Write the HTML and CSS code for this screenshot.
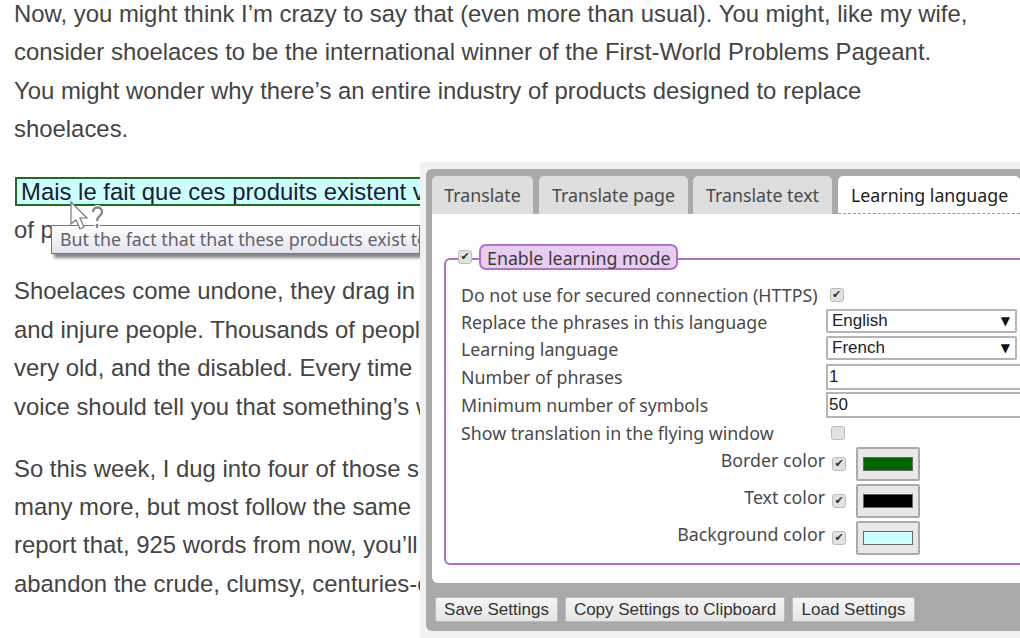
FILE: index.html
```html
<!DOCTYPE html>
<html lang="en">
<head>
    <meta charset="UTF-8">
    <title>Learning language</title>
    <link rel="stylesheet" href="styles.css">
</head>
<body>
<div class="article">
    <p>Now, you might think I’m crazy to say that (even more than usual). You might, like my wife,<br>
        consider shoelaces to be the international winner of the First-World Problems Pageant.<br>
        You might wonder why there’s an entire industry of products designed to replace<br>
        shoelaces.</p>
    <p class="under-popup"><span class="highlight">Mais le fait que ces produits existent v</span><br>
        of p</p>
    <p class="under-popup">Shoelaces come undone, they drag in<br>
        and injure people. Thousands of peopl<br>
        very old, and the disabled. Every time<br>
        voice should tell you that something’s w</p>
    <p class="under-popup">So this week, I dug into four of those s<br>
        many more, but most follow the same<br>
        report that, 925 words from now, you’ll<br>
        abandon the crude, clumsy, centuries-o</p>
</div>

<div class="tip">But the fact that that these products exist to solve</div>
<svg class="cursor" width="36" height="32" viewBox="0 0 36 32">
    <path d="M1 1 L1 23 L6 19 L10 28 L14 26 L10 17 L17 17 Z" fill="#fff" stroke="#777" stroke-width="1.2"/>
    <path d="M23 11 C23 5 32 5 32 11 C32 15 27 15 27 20 M27 23 L27 27" fill="none" stroke="#fff" stroke-width="5"/>
    <path d="M23 11 C23 5 32 5 32 11 C32 15 27 15 27 20 M27 23 L27 27" fill="none" stroke="#888" stroke-width="2.4"/>
</svg>

<div class="popup">
    <div class="panel">
        <div class="tabs">
            <div class="tab tab-1">Translate</div>
            <div class="tab tab-2">Translate page</div>
            <div class="tab tab-3">Translate text</div>
            <div class="tab active">Learning language</div>
        </div>
        <div class="content">
            <div class="group">
                <div class="legend">
                    <input type="checkbox" checked disabled>
                    <span class="legend-label">Enable learning mode</span>
                </div>
                <div class="row row-https">
                    <span>Do not use for secured connection (HTTPS)</span>
                    <input type="checkbox" checked disabled>
                </div>
                <div class="row row-select">
                    <span class="label">Replace the phrases in this language</span>
                    <div class="fake-select"><span>English</span><span class="arrow">▼</span></div>
                </div>
                <div class="row row-select">
                    <span class="label">Learning language</span>
                    <div class="fake-select"><span>French</span><span class="arrow">▼</span></div>
                </div>
                <div class="row row-number">
                    <span class="label">Number of phrases</span>
                    <input class="num" type="text" value="1">
                </div>
                <div class="row row-input">
                    <span class="label">Minimum number of symbols</span>
                    <input class="num" type="text" value="50">
                </div>
                <div class="row row-flying">
                    <span class="label">Show translation in the flying window</span>
                    <input type="checkbox" disabled>
                </div>
                <div class="colors">
                    <div class="color-row">
                        <span>Border color</span>
                        <input type="checkbox" checked disabled>
                        <div class="swatch"><div class="swatch-fill fill-green"></div></div>
                    </div>
                    <div class="color-row">
                        <span>Text color</span>
                        <input type="checkbox" checked disabled>
                        <div class="swatch"><div class="swatch-fill fill-black"></div></div>
                    </div>
                    <div class="color-row">
                        <span>Background color</span>
                        <input type="checkbox" checked disabled>
                        <div class="swatch"><div class="swatch-fill fill-cyan"></div></div>
                    </div>
                </div>
            </div>
        </div>
        <div class="footer">
            <button>Save Settings</button>
            <button>Copy Settings to Clipboard</button>
            <button>Load Settings</button>
        </div>
    </div>
</div>
</body>
</html>
```

FILE: styles.css
```css
html, body {
    height: 100%;
}
body {
    margin: 0;
    background: #fff;
    overflow: hidden;
    font-family: "Liberation Sans", Arial, sans-serif;
    color: #444;
}

.article {
    margin-top: -5px;
    padding: 0 0 0 14px;
    white-space: nowrap;
    font-size: 23.9px;
    line-height: 38.4px;
}
.article p {
    margin: 0 0 23.5px;
}
.article .under-popup {
    width: 406px;
    overflow: hidden;
}
.highlight {
    display: inline-block;
    width: 406px;
    box-sizing: border-box;
    overflow: hidden;
    vertical-align: top;
    margin-top: 5px;
    line-height: 25px;
    padding: 0 5px 0 4px;
    margin-left: 1px;
    color: #1a2030;
    background: #ccffff;
    border: 2px solid #1d6e1d;
    border-width: 2px 0 2px 2px;
}

.cursor {
    position: absolute;
    left: 70px;
    top: 201px;
}
.tip {
    position: absolute;
    left: 51px;
    top: 225px;
    width: 369px;
    height: 29px;
    padding-left: 8px;
    box-sizing: border-box;
    white-space: nowrap;
    overflow: hidden;
    font-family: "Noto Sans", sans-serif;
    font-size: 17.8px;
    line-height: 27px;
    color: #62626c;
    background: linear-gradient(#fff, #e3e3ef);
    border: 1px solid #777;
    box-shadow: 3px 4px 3px #888;
}

.popup {
    position: absolute;
    left: 420px;
    top: 162px;
    right: 0;
    bottom: 0;
    padding: 7px 0 7px 6px;
    background: #f1f1f1;
    font-family: "Noto Sans", sans-serif;
    font-size: 17.8px;
    color: #4a4a4a;
}
.panel {
    display: flex;
    flex-direction: column;
    height: 100%;
    background: #a9a9a9;
    border-radius: 6px 0 0 6px;
    padding: 7px 0 0 6px;
    box-sizing: border-box;
}

.tabs {
    display: flex;
    height: 38px;
    flex-shrink: 0;
}
.tab {
    height: 38px;
    line-height: 38px;
    text-align: center;
    white-space: nowrap;
    background: #dedede;
    border-radius: 5px 5px 0 0;
}
.tab-1 {
    width: 101px;
    margin-right: 6px;
}
.tab-2 {
    width: 149px;
    margin-right: 5px;
}
.tab-3 {
    width: 139px;
    margin-right: 6px;
}
.active {
    flex: 1;
    background: #fff;
    color: #222;
    text-align: left;
    padding-left: 13px;
    border-bottom: 1px dashed #999;
    box-sizing: border-box;
}

.content {
    height: 369px;
    flex-shrink: 0;
    background: #fff;
    border-radius: 0 0 0 6px;
    padding: 32px 0 0 12px;
    box-sizing: border-box;
}
.group {
    position: relative;
    height: 307px;
    margin-top: 12px;
    padding: 22px 0 0 15px;
    box-sizing: border-box;
    border: 2px solid #b070cc;
    border-right: none;
    border-radius: 6px 0 0 6px;
}
.legend {
    position: absolute;
    left: 12px;
    top: -16px;
    display: flex;
    align-items: center;
    gap: 7px;
}
.legend-label {
    padding: 0 6px;
    height: 26px;
    line-height: 24px;
    white-space: nowrap;
    color: #3a3a3a;
    background: #e9cdf0;
    border: 2px solid #b070cc;
    border-radius: 7px;
    box-sizing: border-box;
}

input[type="checkbox"] {
    appearance: none;
    flex-shrink: 0;
    width: 14px;
    height: 14px;
    margin: 0;
    background: #e2e2e2;
    border: 1px solid #bcbcbc;
    border-radius: 3px;
    box-sizing: border-box;
    font-size: 11px;
    line-height: 12px;
    text-align: center;
    color: #333;
    font-family: "DejaVu Sans", sans-serif;
}
input[type="checkbox"]:checked::after {
    content: "✔";
}

.row {
    display: flex;
    align-items: center;
    white-space: nowrap;
}
.row-https {
    height: 26px;
    gap: 12px;
}
.row-select {
    height: 27px;
}
.row-number {
    height: 29px;
}
.row-input {
    height: 28px;
}
.row-flying {
    height: 28px;
}
.label {
    width: 365px;
    flex-shrink: 0;
}
.row-flying input {
    margin-left: 5px;
}

.fake-select {
    display: flex;
    justify-content: space-between;
    align-items: center;
    width: 191px;
    height: 24px;
    margin-bottom: 2px;
    padding: 0 5px 0 4px;
    box-sizing: border-box;
    background: #fff;
    border: 2px solid #b5b5b5;
    border-radius: 2px;
    font-family: "Liberation Sans", Arial, sans-serif;
    font-size: 17px;
    color: #222;
}
.arrow {
    font-size: 12px;
    color: #111;
    font-family: "DejaVu Sans", sans-serif;
}
.num {
    width: 230px;
    height: 26px;
    padding: 0 1px;
    box-sizing: border-box;
    background: #fff;
    border: 2px solid #b5b5b5;
    font-family: "Liberation Sans", Arial, sans-serif;
    font-size: 17px;
    color: #222;
    outline: none;
}

.colors {
    width: 459px;
}
.color-row {
    display: flex;
    justify-content: flex-end;
    align-items: center;
    gap: 7px;
    height: 34px;
    margin-bottom: 3px;
    white-space: nowrap;
}
.color-row span {
    margin-top: -8px;
}
.swatch {
    width: 64px;
    height: 34px;
    margin-left: 3px;
    padding: 8px 5px;
    box-sizing: border-box;
    background: #e8e8e8;
    border: 2px solid #ababab;
    border-radius: 2px;
}
.swatch-fill {
    height: 100%;
    border: 1px solid #666;
    box-sizing: border-box;
}
.fill-green {
    background: #006400;
}
.fill-black {
    background: #000;
}
.fill-cyan {
    background: #ccffff;
}

.footer {
    display: flex;
    gap: 7px;
    padding: 14px 0 0 3px;
}
button {
    height: 25px;
    padding: 0;
    background: linear-gradient(#f4f4f4, #e6e6e6);
    border: 1px solid #bbb;
    border-radius: 2px;
    font-family: "Liberation Sans", Arial, sans-serif;
    font-size: 17px;
    color: #333;
    white-space: nowrap;
}
button:nth-child(1) {
    width: 123px;
}
button:nth-child(2) {
    width: 220px;
}
button:nth-child(3) {
    width: 123px;
}
```
